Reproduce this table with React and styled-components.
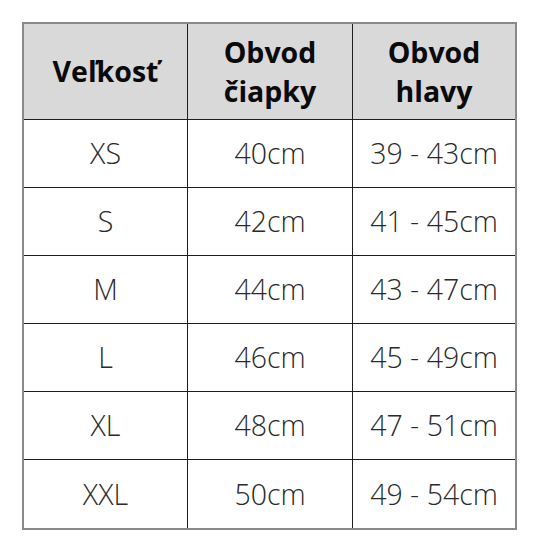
import React from "react";
import styled, { createGlobalStyle } from "styled-components";

const GlobalStyle = createGlobalStyle`
  html, body { margin: 0; padding: 0; background: #ffffff; }
  body { font-family: "Open Sans", "Liberation Sans", sans-serif; }
`;

const Page = styled.div`
  padding: 22px 0 0 22px;
`;

const Table = styled.div`
  width: 495px;
  box-sizing: border-box;
  border: 2px solid #8a8a8a;
  display: grid;
  grid-template-columns: 164px 165px 162px;
  grid-template-rows: 96px repeat(6, 68px);
`;

const Cell = styled.div`
  box-sizing: border-box;
  display: flex;
  align-items: center;
  justify-content: center;
  text-align: center;
  border-right: ${(p) => (p.$lastCol ? "none" : "1px solid #1e1e1e")};
  border-bottom: ${(p) => (p.$lastRow ? "none" : "1px solid #1e1e1e")};
  background: ${(p) => (p.$head ? "#d9d9d9" : "#ffffff")};
  color: ${(p) => (p.$head ? "#0a0a0a" : "#2a2a2a")};
  font-family: ${(p) =>
    p.$head
      ? '"Open Sans", "Liberation Sans", sans-serif'
      : '"Open Sans Light", "Open Sans", "Liberation Sans", sans-serif'};
  font-size: 28.5px;
  font-weight: ${(p) => (p.$head ? 700 : 300)};
  line-height: 39px;
`;

const header = ["Veľkosť", "Obvod\nčiapky", "Obvod\nhlavy"];
const rows = [
  ["XS", "40cm", "39 - 43cm"],
  ["S", "42cm", "41 - 45cm"],
  ["M", "44cm", "43 - 47cm"],
  ["L", "46cm", "45 - 49cm"],
  ["XL", "48cm", "47 - 51cm"],
  ["XXL", "50cm", "49 - 54cm"],
];

export default function App() {
  return (
    <>
      <GlobalStyle />
      <Page>
        <Table>
          {header.map((h, i) => (
            <Cell key={"h" + i} $head $lastCol={i === 2}>
              <span>
                {h.split("\n").map((line, j) => (
                  <React.Fragment key={j}>
                    {j > 0 && <br />}
                    {line}
                  </React.Fragment>
                ))}
              </span>
            </Cell>
          ))}
          {rows.map((r, ri) =>
            r.map((c, ci) => (
              <Cell
                key={ri + "-" + ci}
                $lastCol={ci === 2}
                $lastRow={ri === rows.length - 1}
              >
                {c}
              </Cell>
            ))
          )}
        </Table>
      </Page>
    </>
  );
}
